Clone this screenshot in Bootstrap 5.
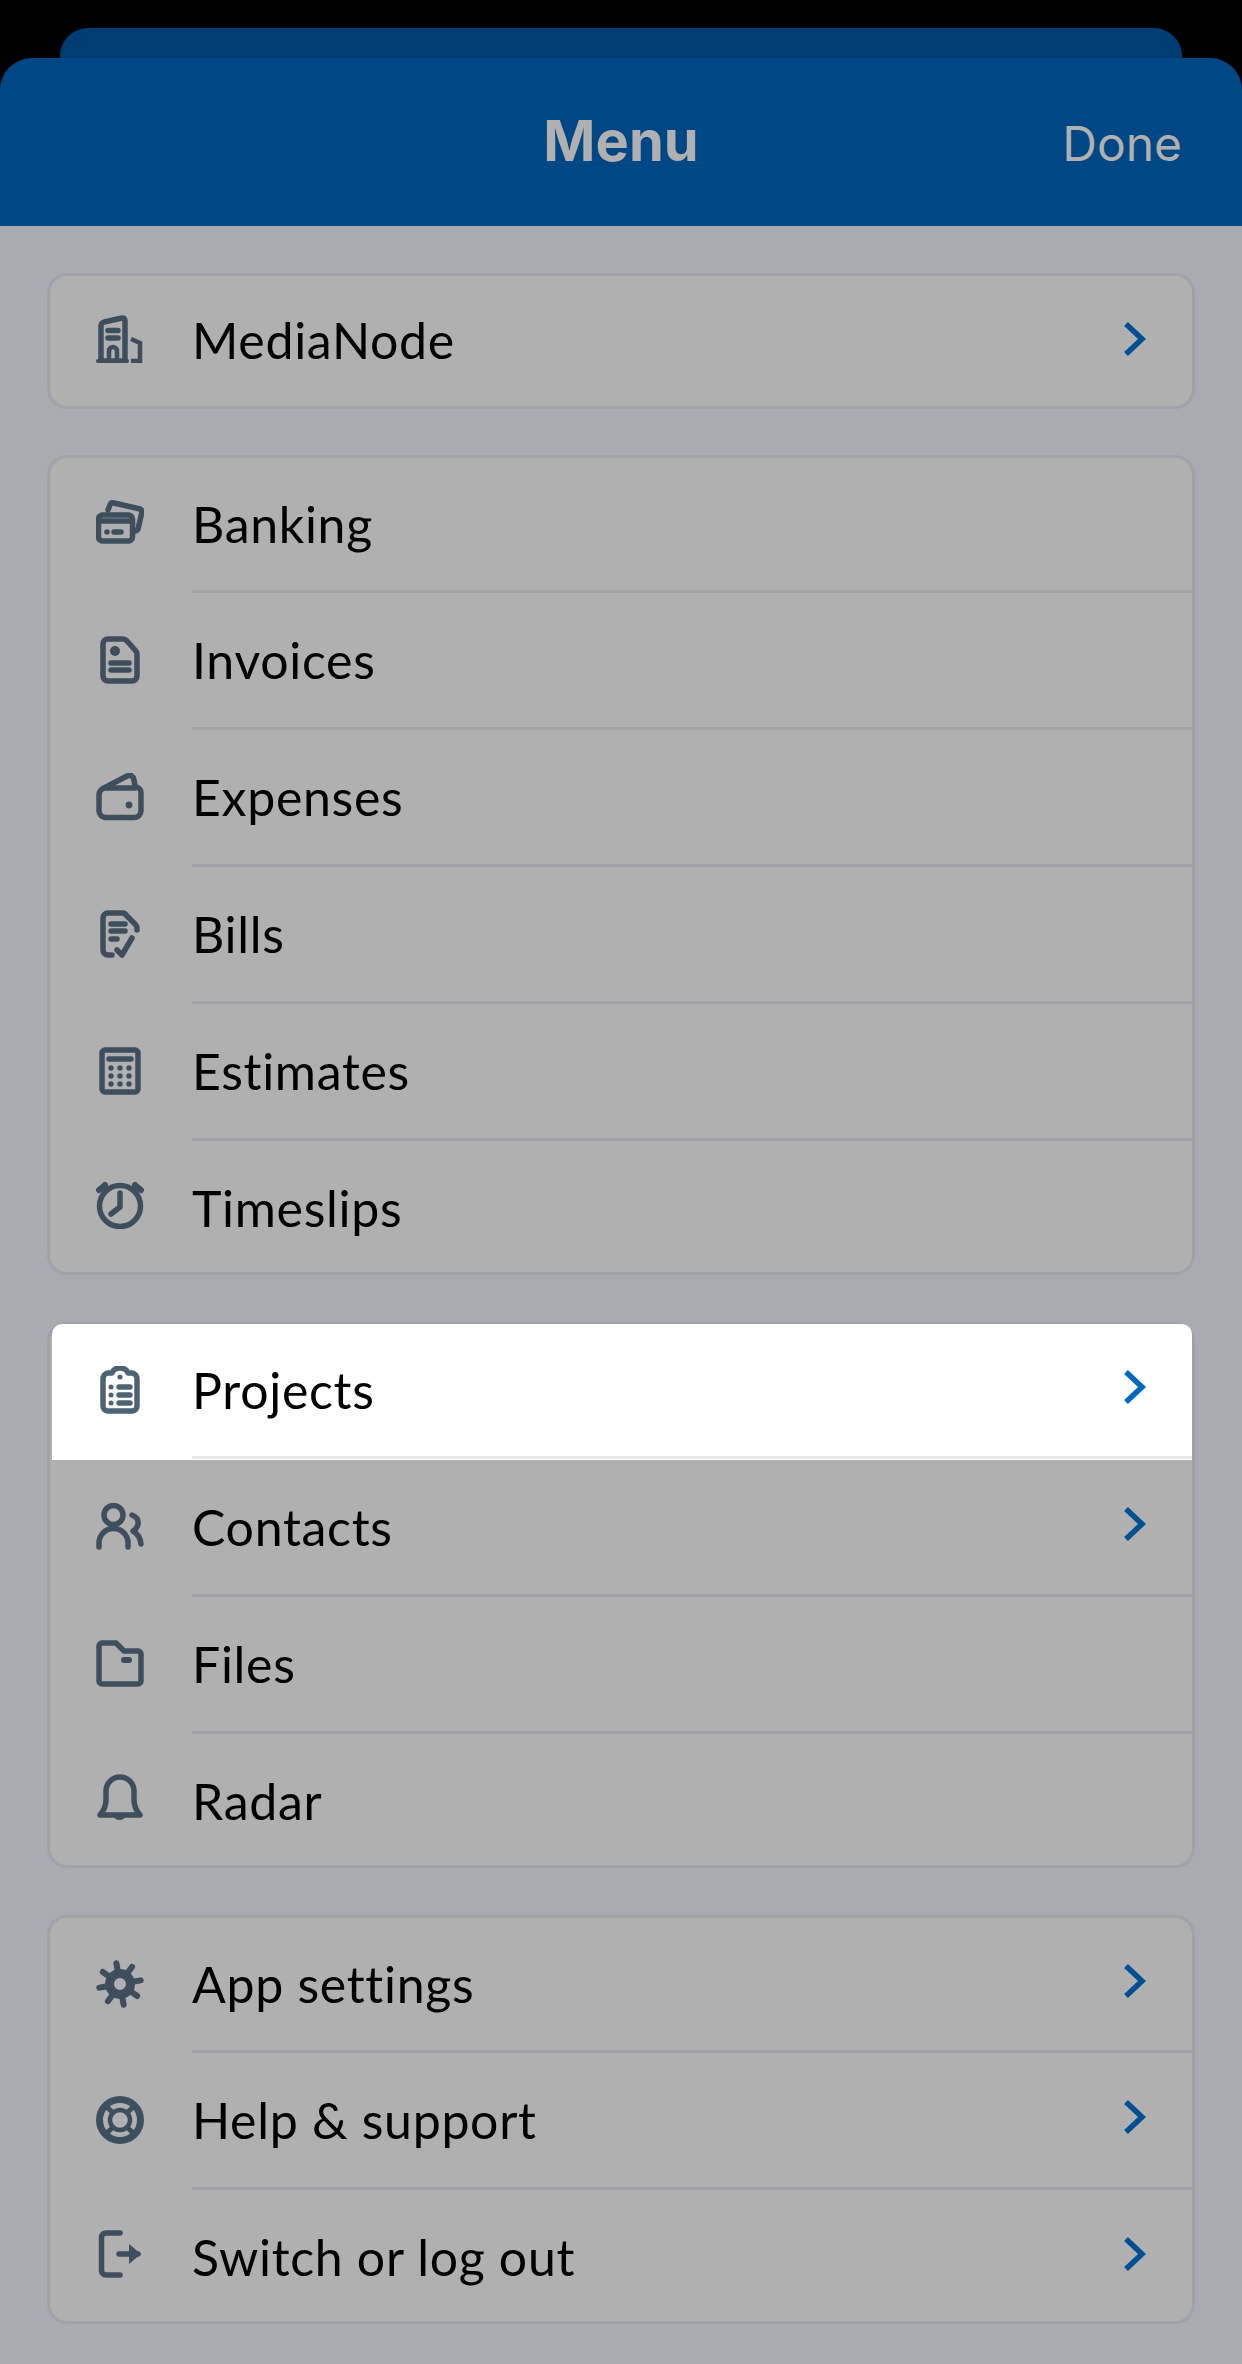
<!DOCTYPE html>
<html lang="en">
<head>
  <meta charset="UTF-8">
  <title>Menu</title>
  <link href="https://cdn.jsdelivr.net/npm/bootstrap@5.3.3/dist/css/bootstrap.min.css" rel="stylesheet">
  <style>
    html, body {
      height: 100%;
    }
    body {
      background-color: #000;
      overflow: hidden;
    }
    .sheet-back {
      height: 30px;
      margin: 28px 60px 0;
      background-color: #003c74;
      border-radius: 28px 28px 0 0;
    }
    .sheet-head {
      position: relative;
      height: 168px;
      background-color: #004785;
      border-radius: 32px 32px 0 0;
      color: #b0b0b0;
      font-family: Inter, sans-serif;
    }
    .head-title {
      font-size: 56px;
      font-weight: 700;
      line-height: 1;
      padding-top: 55px;
    }
    .head-done {
      position: absolute;
      right: 60px;
      top: 62px;
      font-size: 48px;
      line-height: 1;
    }
    .sheet-body {
      background-color: #a9abb0;
      padding: 47px 47px 40px;
      height: 2138px;
    }
    .menu-group {
      margin-bottom: 47px;
      background-color: #b0b0b0;
      border: 3px solid #a0a2a8;
      border-radius: 20px;
      font-family: Lato, sans-serif;
      font-size: 50px;
      color: #000;
    }
    .menu-group:first-child {
      margin-bottom: 46px;
    }
    .menu-row {
      display: flex;
      height: 137px;
      padding: 0;
      background: transparent;
      border: 0;
      border-radius: 0;
      color: #000;
    }
    .menu-row:first-child {
      height: 135px;
    }
    .menu-row:last-child {
      height: 131px;
    }
    .menu-row:only-child {
      height: 130px;
    }
    .menu-row:only-child .menu-body span {
      padding-top: 0;
      padding-bottom: 2px;
    }
    .menu-ico-cell {
      width: 142px;
      padding-left: 46px;
      flex: none;
      color: #3e4e5c;
    }
    .menu-ico {
      width: 48px;
      height: 48px;
      fill: none;
      stroke: currentColor;
      stroke-width: 5.5;
      stroke-linecap: round;
      stroke-linejoin: round;
      margin-bottom: 4px;
    }
    .menu-ico .solid {
      fill: currentColor;
      stroke: none;
    }
    .menu-body {
      padding-right: 45px;
      padding-bottom: 3px;
      border-bottom: 3px solid #a0a2a8;
      letter-spacing: 0.7px;
      line-height: 1;
    }
    .menu-body span {
      padding-top: 3px;
    }
    .menu-row:last-child .menu-body {
      border-bottom: 0;
      padding-bottom: 0;
    }
    .menu-chev {
      width: 24px;
      height: 36px;
      fill: none;
      stroke: #004f92;
      stroke-width: 5.5;
      margin-bottom: 4px;
    }
    .menu-row.is-pressed {
      height: 136px;
      margin-top: -1px;
      margin-left: 2px;
      background-color: #fff;
      border-bottom: 1px solid #fff;
      border-top-left-radius: 10px;
      border-top-right-radius: 10px;
    }
    .is-pressed .menu-ico-cell {
      margin-left: -2px;
      color: #4f6272;
    }
    .is-pressed .menu-body {
      border-bottom-color: #e6e6e8;
    }
    .is-pressed .menu-chev {
      stroke: #0068bd;
    }
  </style>
</head>
<body>
  <div class="sheet-back"></div>
  <div class="sheet-head text-center">
    <div class="head-title">Menu</div>
    <div class="head-done">Done</div>
  </div>
  <div class="sheet-body">

    <div class="list-group menu-group">
      <a class="list-group-item menu-row">
        <div class="menu-ico-cell d-flex align-items-center">
          <svg class="menu-ico" viewBox="0 0 48 48"><path d="M5 46V11q0-3 3-4l18-4q3 0 3 3v40z"/><path d="M2 46h29" stroke-width="4"/><path d="M12 15.500h10M12 23h10"/><path d="M13 46V36a4 4 0 0 1 8 0v10" stroke-width="4.500"/><path d="M35 24l9 4v18h-9" stroke-width="4.500" stroke-linecap="butt" stroke-linejoin="miter"/></svg>
        </div>
        <div class="menu-body d-flex align-items-center justify-content-between flex-grow-1">
          <span>MediaNode</span>
          <svg class="menu-chev" viewBox="0 0 24 36"><path d="M3 3l16 15L3 33"/></svg>
        </div>
      </a>
    </div>

    <div class="list-group menu-group">
      <a class="list-group-item menu-row">
        <div class="menu-ico-cell d-flex align-items-center">
          <svg class="menu-ico" viewBox="0 0 48 48"><rect x="2.500" y="15" width="34" height="26" rx="4"/><path d="M3 21h33"/><circle class="solid" cx="11" cy="32" r="2.800"/><path d="M18 32h7"/><path d="M12 10l2-5q1-3 4-2l26 6q2 1 2 3l-4 17q-1 2-3 2"/></svg>
        </div>
        <div class="menu-body d-flex align-items-center flex-grow-1"><span>Banking</span></div>
      </a>
      <a class="list-group-item menu-row">
        <div class="menu-ico-cell d-flex align-items-center">
          <svg class="menu-ico" viewBox="0 0 48 48"><path d="M12 3h15q2 0 4 2l8 9q2 2 2 4v22a5 5 0 0 1-5 5H12a5 5 0 0 1-5-5V8a5 5 0 0 1 5-5z"/><circle class="solid" cx="19" cy="15" r="5"/><path d="M15 27h18M15 34h18"/></svg>
        </div>
        <div class="menu-body d-flex align-items-center flex-grow-1"><span>Invoices</span></div>
      </a>
      <a class="list-group-item menu-row">
        <div class="menu-ico-cell d-flex align-items-center">
          <svg class="menu-ico" viewBox="0 0 48 48"><path d="M3 22a8 8 0 0 1 5-7L31 3q6-2 7 4l1 7h1a6 6 0 0 1 5 6v18a7 7 0 0 1-7 6.500H9a7 7 0 0 1-6-6.500z"/><path d="M8 15h31"/><circle class="solid" cx="33" cy="32" r="3.400"/></svg>
        </div>
        <div class="menu-body d-flex align-items-center flex-grow-1"><span>Expenses</span></div>
      </a>
      <a class="list-group-item menu-row">
        <div class="menu-ico-cell d-flex align-items-center">
          <svg class="menu-ico" viewBox="0 0 48 48"><path d="M16 45h-4a5 5 0 0 1-5-5V8a5 5 0 0 1 5-5h15q2 0 3 2l9 9q2 2 2 4v2"/><path d="M15 14h14M15 21h14M15 29h6"/><path d="M21 40l5 5 10-17"/></svg>
        </div>
        <div class="menu-body d-flex align-items-center flex-grow-1"><span>Bills</span></div>
      </a>
      <a class="list-group-item menu-row">
        <div class="menu-ico-cell d-flex align-items-center">
          <svg class="menu-ico" viewBox="0 0 48 48"><rect x="6" y="3" width="36" height="42" rx="3"/><path d="M13 12h22"/><g class="solid"><circle cx="15" cy="21" r="2.700"/><circle cx="24" cy="21" r="2.700"/><circle cx="33" cy="21" r="2.700"/><circle cx="15" cy="29" r="2.700"/><circle cx="24" cy="29" r="2.700"/><circle cx="33" cy="29" r="2.700"/><circle cx="15" cy="37" r="2.700"/><circle cx="24" cy="37" r="2.700"/><circle cx="33" cy="37" r="2.700"/></g></svg>
        </div>
        <div class="menu-body d-flex align-items-center flex-grow-1"><span>Estimates</span></div>
      </a>
      <a class="list-group-item menu-row">
        <div class="menu-ico-cell d-flex align-items-center">
          <svg class="menu-ico" viewBox="0 0 48 48"><circle cx="24" cy="25" r="20.500"/><path d="M24 12v14l-9 7"/><path d="M3 9l6-5M45 9l-6-5" stroke-width="6"/></svg>
        </div>
        <div class="menu-body d-flex align-items-center flex-grow-1"><span>Timeslips</span></div>
      </a>
    </div>

    <div class="list-group menu-group">
      <a class="list-group-item menu-row is-pressed">
        <div class="menu-ico-cell d-flex align-items-center">
          <svg class="menu-ico" viewBox="0 0 48 48"><path d="M12 7h4q2-5 8-5t8 5h4a6 6 0 0 1 5 6v27a5 5 0 0 1-5 5H12a5 5 0 0 1-5-5V13a6 6 0 0 1 5-6z"/><circle class="solid" cx="24" cy="11" r="2.500"/><circle class="solid" cx="15" cy="21" r="2.500"/><circle class="solid" cx="15" cy="29" r="2.500"/><circle class="solid" cx="15" cy="37" r="2.500"/><path d="M23 21h11M23 29h11M23 37h11"/></svg>
        </div>
        <div class="menu-body d-flex align-items-center justify-content-between flex-grow-1">
          <span>Projects</span>
          <svg class="menu-chev" viewBox="0 0 24 36"><path d="M3 3l16 15L3 33"/></svg>
        </div>
      </a>
      <a class="list-group-item menu-row">
        <div class="menu-ico-cell d-flex align-items-center">
          <svg class="menu-ico" viewBox="0 0 48 48"><circle cx="17.500" cy="12" r="9.500"/><path d="M3 44v-4a14.500 14.500 0 0 1 29 0v4"/><path d="M36 12q7 3 6 9-1 5-5 7 7 4 8 13"/></svg>
        </div>
        <div class="menu-body d-flex align-items-center justify-content-between flex-grow-1">
          <span>Contacts</span>
          <svg class="menu-chev" viewBox="0 0 24 36"><path d="M3 3l16 15L3 33"/></svg>
        </div>
      </a>
      <a class="list-group-item menu-row">
        <div class="menu-ico-cell d-flex align-items-center">
          <svg class="menu-ico" viewBox="0 0 48 48"><path d="M3 6a3 3 0 0 1 3-3h14l8 8h14a3 3 0 0 1 3 3v27a3 3 0 0 1-3 3H6a3 3 0 0 1-3-3z"/><path d="M28 20h5" stroke-width="6"/></svg>
        </div>
        <div class="menu-body d-flex align-items-center flex-grow-1"><span>Files</span></div>
      </a>
      <a class="list-group-item menu-row">
        <div class="menu-ico-cell d-flex align-items-center">
          <svg class="menu-ico" viewBox="0 0 48 48"><path d="M4 41q6-7 6-15v-9a14 14 0 0 1 28 0v9q0 8 6 15z"/><path class="solid" d="M18 43a6 5 0 0 0 11 0z"/></svg>
        </div>
        <div class="menu-body d-flex align-items-center flex-grow-1"><span>Radar</span></div>
      </a>
    </div>

    <div class="list-group menu-group">
      <a class="list-group-item menu-row">
        <div class="menu-ico-cell d-flex align-items-center">
          <svg class="menu-ico" viewBox="0 0 48 48"><circle cx="24" cy="24" r="10.500" stroke-width="9"/><g stroke-width="6"><path d="M24 10V3" transform="rotate(-10 24 24)"/><path d="M24 10V3" transform="rotate(35 24 24)"/><path d="M24 10V3" transform="rotate(80 24 24)"/><path d="M24 10V3" transform="rotate(125 24 24)"/><path d="M24 10V3" transform="rotate(170 24 24)"/><path d="M24 10V3" transform="rotate(215 24 24)"/><path d="M24 10V3" transform="rotate(260 24 24)"/><path d="M24 10V3" transform="rotate(305 24 24)"/></g></svg>
        </div>
        <div class="menu-body d-flex align-items-center justify-content-between flex-grow-1">
          <span>App settings</span>
          <svg class="menu-chev" viewBox="0 0 24 36"><path d="M3 3l16 15L3 33"/></svg>
        </div>
      </a>
      <a class="list-group-item menu-row">
        <div class="menu-ico-cell d-flex align-items-center">
          <svg class="menu-ico" viewBox="0 0 48 48"><circle cx="24" cy="24" r="20.500" stroke-width="7"/><circle cx="24" cy="24" r="10" stroke-width="4.500"/><path d="M16 16l-7-7M32 16l7-7M16 32l-7 7M32 32l7 7" stroke-width="5" stroke-linecap="butt"/></svg>
        </div>
        <div class="menu-body d-flex align-items-center justify-content-between flex-grow-1">
          <span>Help &amp; support</span>
          <svg class="menu-chev" viewBox="0 0 24 36"><path d="M3 3l16 15L3 33"/></svg>
        </div>
      </a>
      <a class="list-group-item menu-row">
        <div class="menu-ico-cell d-flex align-items-center">
          <svg class="menu-ico" viewBox="0 0 48 48"><path d="M24 3H10a4.500 4.500 0 0 0-4.500 4.500v33A4.500 4.500 0 0 0 10 45h14"/><path d="M23 24h19"/><path class="solid" d="M33 14l12 10-12 10z"/></svg>
        </div>
        <div class="menu-body d-flex align-items-center justify-content-between flex-grow-1">
          <span>Switch or log out</span>
          <svg class="menu-chev" viewBox="0 0 24 36"><path d="M3 3l16 15L3 33"/></svg>
        </div>
      </a>
    </div>

  </div>
  <script src="https://cdn.jsdelivr.net/npm/bootstrap@5.3.3/dist/js/bootstrap.bundle.min.js"></script>
</body>
</html>
